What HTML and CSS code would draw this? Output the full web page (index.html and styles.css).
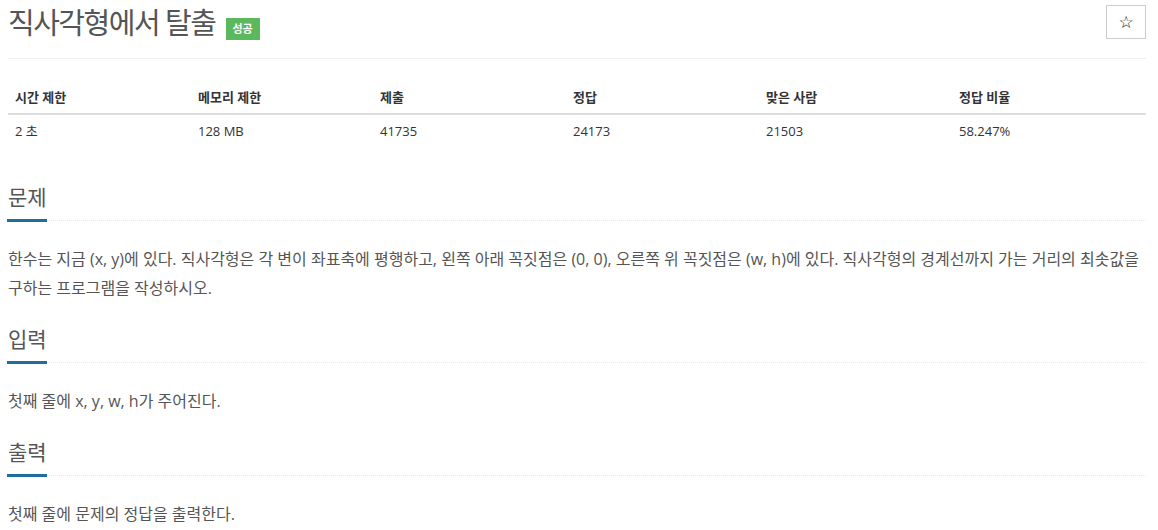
FILE: index.html
```html
<!DOCTYPE html>
<html lang="ko">
<head>
<meta charset="utf-8">
<title>직사각형에서 탈출</title>
<link rel="stylesheet" href="styles.css">
</head>
<body>
<div class="page">
  <div class="title-row">
    <h1 class="title">직사각형에서 탈출 <span class="badge">성공</span></h1>
    <button class="star-btn" type="button">☆</button>
  </div>
  <div class="divider"></div>

  <table class="info">
    <thead>
      <tr>
        <th class="c1">시간 제한</th>
        <th class="c2">메모리 제한</th>
        <th class="c3">제출</th>
        <th class="c4">정답</th>
        <th class="c5">맞은 사람</th>
        <th class="c6">정답 비율</th>
      </tr>
    </thead>
    <tbody>
      <tr>
        <td>2 초</td>
        <td>128 MB</td>
        <td>41735</td>
        <td>24173</td>
        <td>21503</td>
        <td>58.247%</td>
      </tr>
    </tbody>
  </table>

  <section class="section first">
    <div class="headline"><h2>문제</h2></div>
    <p class="text">한수는 지금 (x, y)에 있다. 직사각형은 각 변이 좌표축에 평행하고, 왼쪽 아래 꼭짓점은 (0, 0), 오른쪽 위 꼭짓점은 (w, h)에 있다. 직사각형의 경계선까지 가는 거리의 최솟값을 구하는 프로그램을 작성하시오.</p>
  </section>

  <section class="section">
    <div class="headline"><h2>입력</h2></div>
    <p class="text">첫째 줄에 x, y, w, h가 주어진다.</p>
  </section>

  <section class="section">
    <div class="headline"><h2>출력</h2></div>
    <p class="text">첫째 줄에 문제의 정답을 출력한다.</p>
  </section>
</div>
</body>
</html>
```

FILE: styles.css
```css
html, body {
  margin: 0;
  padding: 0;
  background: #fff;
}
body {
  font-family: "Open Sans", "Noto Sans CJK KR", sans-serif;
  color: #555;
}
.page {
  padding: 0 12px 0 8px;
}
.title-row {
  display: flex;
  justify-content: space-between;
  align-items: flex-start;
  padding-top: 5px;
  height: 33px;
  margin-bottom: 20px;
}
.title {
  margin: 0;
  padding-top: 1px;
  font-size: 29px;
  line-height: 33px;
  font-weight: 400;
  letter-spacing: -1.5px;
  color: #555;
}
.badge {
  display: inline-block;
  vertical-align: 1px;
  margin-left: 4px;
  width: 34px;
  height: 22px;
  line-height: 22px;
  text-align: center;
  background: #5cb85c;
  color: #fff;
  font-size: 11px;
  font-weight: 700;
  letter-spacing: 0;
}
.star-btn {
  width: 40px;
  height: 34px;
  padding: 0;
  margin: 0;
  border: 1px solid #ccc;
  background: #fff;
  color: #222;
  font-family: "DejaVu Sans", sans-serif;
  font-size: 17px;
  line-height: 32px;
}
.divider {
  border-top: 1px solid #eee;
}
.info {
  width: 100%;
  margin-top: 22px;
  border-collapse: collapse;
  table-layout: fixed;
  font-size: 13px;
  color: #333;
}
.info th, .info td {
  padding: 7px 7px;
  line-height: 18px;
  text-align: left;
}
.info th {
  font-weight: 700;
  border-bottom: 2px solid #ddd;
}
.info .c1 { width: 169px; }
.info .c2 { width: 168px; }
.info .c3 { width: 179px; }
.info .c4 { width: 179px; }
.info .c5 { width: 179px; }
.section.first {
  margin-top: 37px;
}
.headline {
  border-bottom: 1px dotted #e4e9f0;
  line-height: 0;
}
.headline h2 {
  display: inline-block;
  margin: 0 0 -2px -1px;
  padding: 0 0 9px 1px;
  font-size: 21px;
  line-height: 26px;
  font-weight: 400;
  color: #555;
  border-bottom: 3px solid #1f6f9c;
}
.text {
  margin: 24px 0 23px;
  font-size: 16px;
  line-height: 29px;
  color: #555;
}
```
